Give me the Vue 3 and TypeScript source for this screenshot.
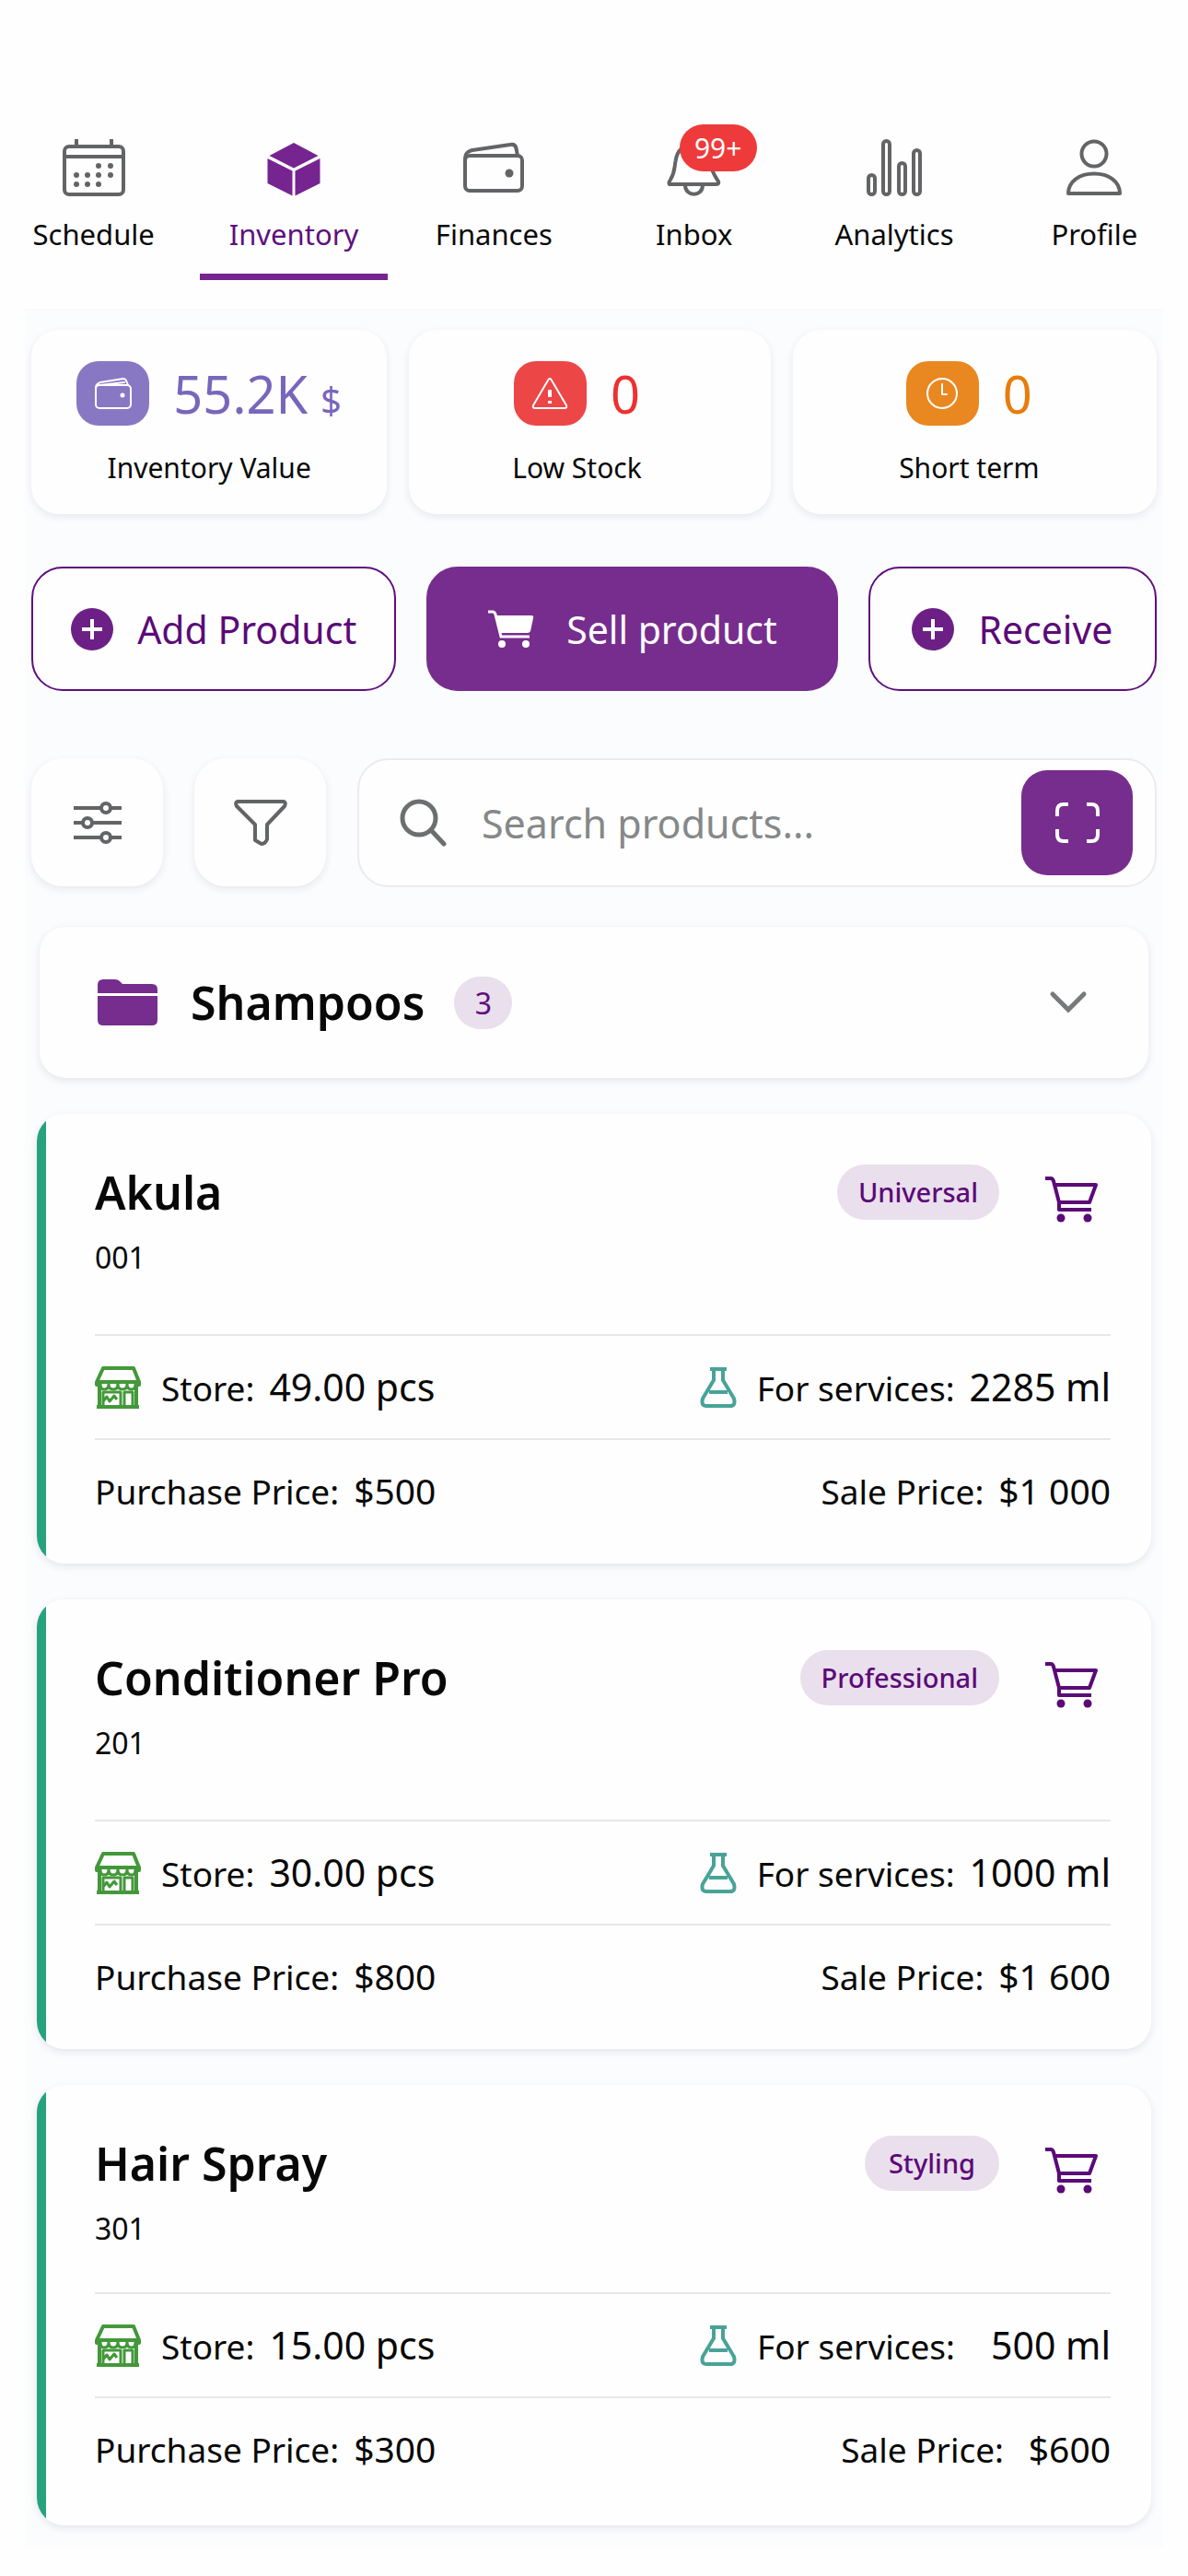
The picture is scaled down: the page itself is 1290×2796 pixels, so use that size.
<script setup lang="ts">
import { ref } from 'vue'

interface Tab {
  id: string
  label: string
  badge?: string
}

interface Stat {
  id: string
  label: string
  value: string
  unit?: string
}

interface Product {
  name: string
  code: string
  tag: string
  store: string
  services: string
  purchase: string
  sale: string
}

const tabs: Tab[] = [
  { id: 'schedule', label: 'Schedule' },
  { id: 'inventory', label: 'Inventory' },
  { id: 'finances', label: 'Finances' },
  { id: 'inbox', label: 'Inbox', badge: '99+' },
  { id: 'analytics', label: 'Analytics' },
  { id: 'profile', label: 'Profile' },
]
const activeTab = ref('inventory')

const stats: Stat[] = [
  { id: 'value', label: 'Inventory Value', value: '55.2K', unit: '$' },
  { id: 'low', label: 'Low Stock', value: '0' },
  { id: 'term', label: 'Short term', value: '0' },
]

const products: Product[] = [
  { name: 'Akula', code: '001', tag: 'Universal', store: '49.00 pcs', services: '2285 ml', purchase: '$500', sale: '$1 000' },
  { name: 'Conditioner Pro', code: '201', tag: 'Professional', store: '30.00 pcs', services: '1000 ml', purchase: '$800', sale: '$1 600' },
  { name: 'Hair Spray', code: '301', tag: 'Styling', store: '15.00 pcs', services: '500 ml', purchase: '$300', sale: '$600' },
]

const query = ref('')
</script>

<template>
  <div class="app">
    <nav class="tabs">
      <a
        v-for="tab in tabs"
        :key="tab.id"
        href="#"
        class="tab"
        :class="{ active: tab.id === activeTab }"
        @click.prevent="activeTab = tab.id"
      >
        <span class="tab-icon">
          <svg v-if="tab.id === 'schedule'" viewBox="0 0 72 66" class="line">
            <rect x="4" y="10" width="64" height="52" rx="5" />
            <path d="M4 21H68M17 2V9M55 2V9" />
            <g class="solid">
              <circle cx="41" cy="31" r="3" /><circle cx="54" cy="31" r="3" />
              <circle cx="17" cy="41" r="3" /><circle cx="29" cy="41" r="3" />
              <circle cx="41" cy="41" r="3" /><circle cx="54" cy="41" r="3" />
              <circle cx="17" cy="51" r="3" /><circle cx="29" cy="51" r="3" />
              <circle cx="41" cy="51" r="3" />
            </g>
          </svg>
          <svg v-else-if="tab.id === 'inventory'" viewBox="0 0 72 66" class="cube">
            <path d="M36 6L62.500 20L36 33.500L9.500 20Z" />
            <path d="M7.500 23L34.500 36.500V63.500L7.500 50Z" />
            <path d="M64.500 23L37.500 36.500V63.500L64.500 50Z" />
          </svg>
          <svg v-else-if="tab.id === 'finances'" viewBox="0 0 72 66" class="line">
            <rect x="5" y="20" width="62" height="38" rx="5" />
            <path d="M5 24C5 17 8 15 13 14L54 8Q59.500 7 60.500 12L62 20" />
            <circle class="solid" cx="53" cy="39" r="4.500" />
          </svg>
          <svg v-else-if="tab.id === 'inbox'" viewBox="0 0 72 66" class="line">
            <path d="M10 51C8 51 8 49 10 46C15 38 14 34 15.500 26C17 14 25 7 36 7C47 7 52 16 54 30C55 38 59 43 62 48Q63 51 60 51Z" />
            <path d="M26 52C26 65 45 65 45 52" />
          </svg>
          <svg v-else-if="tab.id === 'analytics'" viewBox="0 0 72 66" class="line">
            <rect x="8" y="41" width="7" height="21" rx="3.500" />
            <rect x="24" y="4" width="7" height="58" rx="3.500" />
            <rect x="41" y="28" width="7" height="34" rx="3.500" />
            <rect x="57" y="14" width="7" height="48" rx="3.500" />
          </svg>
          <svg v-else viewBox="0 0 72 66" class="line">
            <circle cx="36" cy="18" r="13.500" />
            <path d="M8 61C8 48 20 39.500 36 39.500C52 39.500 64 48 64 61Z" />
          </svg>
          <span v-if="tab.badge" class="tab-badge">{{ tab.badge }}</span>
        </span>
        <span class="tab-label">{{ tab.label }}</span>
      </a>
    </nav>

    <main class="panel">
      <section class="stats">
        <div v-for="stat in stats" :key="stat.id" class="stat" :class="stat.id">
          <div class="stat-row">
            <span class="stat-icon">
              <svg v-if="stat.id === 'value'" viewBox="0 0 42 36">
                <rect x="2" y="9" width="38" height="25" rx="4" />
                <path d="M2 12C2 8 4 7 7 6L32 2Q34 2 35 4L37 9M7 9L33 6" />
                <circle class="dot" cx="31" cy="20" r="2.500" />
              </svg>
              <svg v-else-if="stat.id === 'low'" viewBox="0 0 42 36">
                <path d="M19.500 3Q21 1 22.500 3L39 31Q40 34 37 34H5Q2 34 3 31Z" />
                <path class="mark" d="M21 14V22M21 26V29" />
              </svg>
              <svg v-else viewBox="0 0 42 36">
                <circle cx="21" cy="18" r="16" />
                <path d="M21 8V19H26" />
              </svg>
            </span>
            <span class="stat-value">{{ stat.value }}<small v-if="stat.unit">{{ stat.unit }}</small></span>
          </div>
          <div class="stat-label">{{ stat.label }}</div>
        </div>
      </section>

      <section class="actions">
        <button type="button" class="action">
          <svg class="plus" viewBox="0 0 46 46"><circle cx="23" cy="23" r="23" /><path d="M23 12V34M12 23H34" /></svg>
          Add Product
        </button>
        <button type="button" class="action primary">
          <svg class="cart-solid" viewBox="0 0 52 42">
            <path class="stroke" d="M1 2H6Q8 2 9 5L15 29H46" />
            <path d="M9 6H48Q51 6 50 9L47 23Q46 25 44 25H14Z" />
            <circle cx="16" cy="37" r="4" /><circle cx="42" cy="37" r="4" />
          </svg>
          Sell product
        </button>
        <button type="button" class="action">
          <svg class="plus" viewBox="0 0 46 46"><circle cx="23" cy="23" r="23" /><path d="M23 12V34M12 23H34" /></svg>
          Receive
        </button>
      </section>

      <section class="tools">
        <button type="button" class="tool" aria-label="Settings">
          <svg viewBox="0 0 58 50" class="line">
            <path d="M3 9H33M43 9H55M3 25H13M23 25H55M3 41H33M43 41H55" />
            <circle cx="38" cy="9" r="5" /><circle cx="18" cy="25" r="5" /><circle cx="38" cy="41" r="5" />
          </svg>
        </button>
        <button type="button" class="tool" aria-label="Filter">
          <svg viewBox="0 0 58 50" class="line">
            <path d="M4 2H54Q57 3 55 7L36 27V43Q34 48 30 48L23 44V27L3 7Q1 3 4 2Z" />
          </svg>
        </button>
        <div class="search">
          <svg viewBox="0 0 52 52" class="search-icon">
            <circle cx="22" cy="21" r="18" /><path d="M35 34L49 49" />
          </svg>
          <input v-model="query" type="text" placeholder="Search products..." aria-label="Search products" />
          <button type="button" class="scan" aria-label="Scan">
            <svg viewBox="0 0 48 44">
              <path d="M2 15V9Q2 2 9 2H14M34 2H39Q46 2 46 9V15M46 29V35Q46 42 39 42H34M14 42H9Q2 42 2 35V29" />
            </svg>
          </button>
        </div>
      </section>

      <section class="list">
        <button type="button" class="category">
          <svg class="folder" viewBox="0 0 65 50">
            <path d="M0 15V6Q0 0 6 0H19Q22 0 24 2L27 5H59Q65 5 65 11V15Z" />
            <path d="M0 18H65V44Q65 50 59 50H6Q0 50 0 44Z" />
          </svg>
          <span class="category-name">Shampoos</span>
          <span class="count">3</span>
          <svg class="chevron" viewBox="0 0 42 26"><path d="M4 4L21 21L38 4" /></svg>
        </button>

        <article v-for="item in products" :key="item.code" class="product">
          <header class="head">
            <div>
              <h2>{{ item.name }}</h2>
              <p class="code">{{ item.code }}</p>
            </div>
            <div class="head-side">
              <span class="tag">{{ item.tag }}</span>
              <button type="button" class="cart" :aria-label="`Sell ${item.name}`">
                <svg viewBox="0 0 60 52">
                  <path d="M2 3H8Q10 3 11 6L17 29V37H52M11 10H57L50 29H17" />
                  <circle cx="19" cy="46" r="4.500" /><circle cx="48" cy="46" r="4.500" />
                </svg>
              </button>
            </div>
          </header>
          <div class="row">
            <div class="cell">
              <svg class="shop" viewBox="0 0 50 46">
                <path d="M9 2H42L48 17H2Z" />
                <path d="M2 17V20H5V42M48 17V20H45V42M2 44H48" />
                <path class="thin" d="M6 19Q6 25 10 25Q15 25 15 19Q15 25 20 25Q25 25 25 19Q25 25 30 25Q35 25 35 19Q35 25 40 25Q44 25 44 19" />
                <path class="thin" d="M9 42V28H28V42M32 42V28H41V42M9 38L13 33L16 38L21 32L24 36" />
              </svg>
              <span class="label">Store:</span>
              <span class="amount">{{ item.store }}</span>
            </div>
            <div class="cell">
              <svg class="flask" viewBox="0 0 40 44">
                <path d="M11 2H29M15 3V14L3 34Q1 42 7 42H33Q39 42 37 34L25 14V3M10 27H30" />
              </svg>
              <span class="label">For services:</span>
              <span class="amount services">{{ item.services }}</span>
            </div>
          </div>
          <div class="row">
            <div class="cell">
              <span class="label">Purchase Price:</span>
              <span class="price">{{ item.purchase }}</span>
            </div>
            <div class="cell">
              <span class="label">Sale Price:</span>
              <span class="price sale">{{ item.sale }}</span>
            </div>
          </div>
        </article>
      </section>
    </main>
  </div>
</template>

<style>
body {
  background: #fefefe;
}
</style>

<style scoped>
.app {
  min-height: 100vh;
  font-family: "Noto Sans", "Open Sans", sans-serif;
  color: #080808;
  padding-bottom: 30px;
  box-sizing: border-box;
}
.app * {
  box-sizing: border-box;
}
button {
  font: inherit;
  color: inherit;
  border: 0;
  margin: 0;
  padding: 0;
  background: none;
  cursor: pointer;
}
svg {
  display: block;
  flex: none;
}
.line {
  fill: none;
  stroke: #636466;
  stroke-width: 4;
  stroke-linejoin: round;
}
.solid {
  fill: #636466;
  stroke: none;
}

/* Tabs */
.tabs {
  display: grid;
  grid-template-columns: repeat(6, 1fr);
  column-gap: 14px;
  padding: 149px 0 32px;
}
.tab {
  display: flex;
  flex-direction: column;
  align-items: center;
  padding-bottom: 23px;
  border-bottom: 7px solid transparent;
  color: inherit;
  text-decoration: none;
}
.tab.active {
  color: #5f0f7d;
  border-bottom-color: #762590;
}
.tab-icon {
  position: relative;
  width: 72px;
  height: 66px;
}
.cube {
  fill: #762590;
}
.tab-badge {
  position: absolute;
  left: 20px;
  top: -14px;
  width: 84px;
  height: 51px;
  border-radius: 26px;
  background: #ee3a3a;
  color: #fff;
  font-size: 30px;
  line-height: 51px;
  text-align: center;
}
.tab-label {
  margin-top: 19px;
  font-size: 31px;
  line-height: 40px;
}

/* Panel */
.panel {
  margin: 0 27px;
  padding: 21px 7px 24px;
  background: #fbfcfe;
  border-top: 1px solid #f6f6f8;
}
.stats {
  display: grid;
  grid-template-columns: 386fr 392fr 395fr;
  gap: 24px;
}
.stat {
  display: flex;
  flex-direction: column;
  align-items: center;
  padding: 34px 0 30px;
  border-radius: 30px;
  background: #fefefe;
  box-shadow: 0 3px 8px rgba(30, 30, 60, 0.09);
}
.stat-row {
  display: flex;
  align-items: center;
  gap: 26px;
  height: 70px;
}
.stat.low {
  padding-right: 28px;
}
.stat.term {
  padding-right: 12px;
}
.stat-icon {
  display: grid;
  place-items: center;
  width: 79px;
  height: 70px;
  border-radius: 24px;
}
.stat-icon svg {
  width: 42px;
  height: 36px;
  fill: none;
  stroke: #fff;
  stroke-width: 2;
  stroke-linejoin: round;
  stroke-linecap: round;
}
.stat-icon .dot {
  fill: #fff;
  stroke: none;
}
.stat-icon .mark {
  stroke-width: 4;
  stroke-linecap: butt;
}
.value .stat-icon {
  background: #8878c4;
}
.low .stat-icon {
  background: #ed4646;
}
.term .stat-icon {
  background: #e98820;
}
.stat-value {
  font-size: 56px;
  line-height: 70px;
}
.stat-value small {
  margin-left: 14px;
  font-size: 40px;
  line-height: 40px;
}
.value .stat-value {
  color: #7866bb;
}
.low .stat-value {
  color: #ee3030;
}
.term .stat-value {
  color: #e87c0c;
}
.stat-label {
  margin-top: 26px;
  font-size: 30px;
  line-height: 40px;
}

/* Actions */
.actions {
  display: grid;
  grid-template-columns: 396fr 446fr 313fr;
  gap: 33px;
  margin-top: 57px;
}
.action {
  display: flex;
  align-items: center;
  justify-content: center;
  gap: 26px;
  height: 135px;
  border: 2px solid #5f0f7d;
  border-radius: 34px;
  background: #fefefe;
  color: #5b0a78;
  font-size: 41px;
  line-height: 50px;
  white-space: nowrap;
}
.primary {
  gap: 34px;
  border-color: #762d8d;
  background: #762d8d;
  color: #fff;
}
.plus {
  width: 46px;
  height: 46px;
  fill: #6c2085;
}
.plus path {
  stroke: #fff;
  stroke-width: 4;
}
.cart-solid {
  width: 52px;
  height: 42px;
  fill: #fff;
}
.cart-solid .stroke {
  fill: none;
  stroke: #fff;
  stroke-width: 3;
}

/* Tools */
.tools {
  display: flex;
  gap: 34px;
  margin-top: 73px;
}
.tool {
  display: grid;
  place-items: center;
  width: 143px;
  height: 139px;
  border-radius: 34px;
  background: #fefefe;
  box-shadow: 0 3px 8px rgba(30, 30, 60, 0.09);
}
.tool svg {
  width: 58px;
  height: 50px;
}
.search {
  flex: 1;
  display: flex;
  align-items: center;
  min-width: 0;
  height: 140px;
  padding: 0 24px 0 43px;
  border: 2px solid #ebebed;
  border-radius: 34px;
  background: #fefefe;
}
.search-icon {
  width: 52px;
  height: 52px;
  fill: none;
  stroke: #6c6f70;
  stroke-width: 5;
  stroke-linecap: round;
}
.search input {
  flex: 1;
  min-width: 0;
  margin: 0;
  padding: 0 0 0 38px;
  border: 0;
  outline: 0;
  background: none;
  color: inherit;
  font-family: inherit;
  font-size: 43px;
}
.search input::placeholder {
  color: #858888;
  opacity: 1;
}
.scan {
  display: grid;
  place-items: center;
  width: 121px;
  height: 114px;
  border-radius: 28px;
  background: #762d8d;
}
.scan svg {
  width: 48px;
  height: 44px;
  fill: none;
  stroke: #fff;
  stroke-width: 4;
}

/* List */
.list {
  display: flex;
  flex-direction: column;
  gap: 39px;
  margin-top: 43px;
  padding: 0 6px;
}
.category {
  display: flex;
  align-items: center;
  height: 164px;
  margin: 0 3px;
  padding: 0 66px 0 63px;
  border-radius: 28px;
  background: #fefefe;
  box-shadow: 0 3px 8px rgba(30, 30, 60, 0.1);
}
.folder {
  width: 65px;
  height: 50px;
  fill: #762d8d;
}
.category-name {
  margin-left: 36px;
  font-size: 50px;
  font-weight: 600;
}
.count {
  width: 63px;
  height: 57px;
  margin-left: 32px;
  border-radius: 29px;
  background: #eadfec;
  color: #5f0f7d;
  font-size: 32px;
  line-height: 57px;
}
.chevron {
  width: 42px;
  height: 26px;
  margin-left: auto;
  fill: none;
  stroke: #77797a;
  stroke-width: 5;
  stroke-linecap: round;
}
.product {
  padding: 55px 44px 23px 63px;
  border-radius: 30px;
  background: linear-gradient(to right, #27a27f 10px, #fefefe 10px);
  box-shadow: 0 3px 8px rgba(30, 30, 60, 0.1);
}
.product:last-child {
  padding-bottom: 27px;
}
.head {
  display: flex;
  justify-content: space-between;
  padding-bottom: 63px;
}
.product:last-child .head {
  padding-bottom: 49px;
}
h2 {
  margin: 0;
  font-size: 50px;
  font-weight: 600;
  line-height: 60px;
}
.code {
  margin: 21px 0 0;
  font-size: 32px;
  line-height: 40px;
}
.head-side {
  display: flex;
  align-items: flex-start;
  gap: 48px;
  padding-right: 13px;
}
.tag {
  min-width: 146px;
  padding: 0 23px;
  border-radius: 30px;
  background: #eadfec;
  color: #5b0a78;
  font-size: 29px;
  font-weight: 500;
  line-height: 60px;
  text-align: center;
}
.cart {
  padding-top: 12px;
}
.cart svg {
  width: 60px;
  height: 52px;
  fill: none;
  stroke: #5b0a78;
  stroke-width: 4;
  stroke-linejoin: round;
}
.cart circle {
  fill: #5b0a78;
  stroke: none;
}
.row {
  display: flex;
  justify-content: space-between;
  align-items: center;
  height: 113px;
  border-top: 2px solid #e7e7e9;
}
.cell {
  display: flex;
  align-items: baseline;
  gap: 16px;
  white-space: nowrap;
}
.shop,
.flask {
  align-self: center;
  margin-right: 6px;
  fill: none;
  stroke-width: 4;
  stroke-linejoin: round;
}
.shop {
  width: 50px;
  height: 46px;
  stroke: #43983a;
}
.shop .thin {
  stroke-width: 3;
}
.flask {
  width: 40px;
  height: 44px;
  stroke: #48a397;
}
.label {
  font-size: 37px;
  line-height: 50px;
}
.amount {
  font-size: 41px;
  line-height: 50px;
}
.price {
  font-size: 39px;
  line-height: 50px;
}
.services {
  min-width: 153px;
  text-align: right;
}
.sale {
  min-width: 100px;
  text-align: right;
}
</style>
